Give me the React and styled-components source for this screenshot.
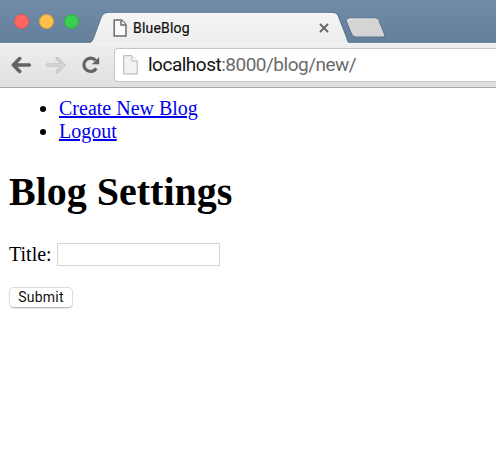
import React from 'react';
import styled, { createGlobalStyle } from 'styled-components';

const GlobalStyle = createGlobalStyle`
  * { box-sizing: border-box; }
  body { margin: 0; background: #fff; overflow: hidden; }
`;

const Browser = styled.div`
  display: flex;
  flex-direction: column;
  width: 496px;
  height: 454px;
  overflow: hidden;
  background: #fff;
`;

const TabStrip = styled.header`
  display: flex;
  align-items: flex-start;
  height: 43px;
  background: linear-gradient(#718ca8, #657f9b);
`;

const WindowControls = styled.div`
  display: flex;
  gap: 10px;
  width: 90px;
  padding: 14px 0 0 14px;
`;

const ControlDot = styled.span`
  width: 15px;
  height: 15px;
  border-radius: 50%;
  background: ${(p) => p.$fill};
  border: 1px solid ${(p) => p.$edge};
`;

const Tab = styled.div`
  display: flex;
  height: 31px;
  margin-top: 12px;
`;

const TabEdge = styled.svg`
  display: block;
  width: 18px;
  height: 31px;
`;

const TabBody = styled.div`
  display: flex;
  align-items: center;
  width: 223px;
  height: 30px;
  margin-top: 1px;
  padding: 0 0 0 5px;
  background: linear-gradient(#f5f5f5, #ededed);
`;

const TabTitle = styled.span`
  width: 186px;
  margin-left: 6px;
  font: 14px/20px Roboto, sans-serif;
  letter-spacing: 0.2px;
  color: #111;
  -webkit-text-stroke: 0.2px #111;
`;

const Glyph = styled.svg`
  display: block;
  flex: none;
`;

const NewTab = styled(Glyph)`
  margin: 17px 0 0 -5px;
`;

const Toolbar = styled.nav`
  display: flex;
  align-items: flex-start;
  height: 45px;
  padding: 4px 0 0 11px;
  background: linear-gradient(#eeeeee, #e0e0e0);
  border-top: 1px solid #f5f5f5;
  border-bottom: 1px solid #a9a9a9;
`;

const NavIcons = styled.div`
  display: flex;
  align-items: center;
  gap: 14px;
  width: 103px;
  height: 34px;
`;

const AddressBar = styled.div`
  display: flex;
  align-items: center;
  flex: 1;
  height: 34px;
  padding-left: 8px;
  background: #fff;
  border: 1px solid #c6c6c6;
  border-right: 0;
  border-radius: 4px 0 0 4px;
`;

const Url = styled.span`
  margin-left: 10px;
  font: 19px/24px Roboto, sans-serif;
  letter-spacing: -0.5px;
  color: #6b6b6b;
  white-space: nowrap;
`;

const Host = styled.span`
  color: #111;
`;

const Page = styled.main`
  padding: 9px 9px;
  font: 20px/22.5px "Liberation Serif", "Times New Roman", serif;
  color: #000;
`;

const Menu = styled.ul`
  margin: 0;
  padding: 0 0 0 50px;
`;

const MenuLink = styled.a`
  color: #0000ee;
  text-decoration: underline;
`;

const Heading = styled.h1`
  margin: 27px 0 27px;
  font-size: 40px;
  line-height: 46px;
  font-weight: bold;
`;

const Field = styled.label`
  display: flex;
  align-items: center;
  height: 24px;
  gap: 5px;
`;

const TextInput = styled.input`
  width: 163px;
  height: 23px;
  margin: 1px 0 0;
  padding: 0 3px;
  background: #fff;
  border: 1px solid #d6d6d6;
  border-radius: 0;
  outline: none;
`;

const SubmitButton = styled.button`
  display: block;
  width: 64px;
  height: 21px;
  margin: 21px 0 0;
  padding: 0;
  font: 14px/19px Roboto, sans-serif;
  letter-spacing: 0.25px;
  color: #111;
  background: #fff;
  border: 1px solid #dcdcdc;
  border-bottom-color: #bcbcbc;
  border-radius: 5px;
  box-shadow: 0 1px 1px rgba(0, 0, 0, 0.1);
`;

export default function App() {
  return (
    <>
      <GlobalStyle />
      <Browser>
        <TabStrip>
          <WindowControls>
            <ControlDot $fill="#ff6561" $edge="#e2554f" />
            <ControlDot $fill="#ffc14a" $edge="#dfa13a" />
            <ControlDot $fill="#3bcc52" $edge="#2dae43" />
          </WindowControls>
          <Tab>
            <TabEdge viewBox="0 0 18 31">
              <defs>
                <linearGradient id="tab" x1="0" y1="0" x2="0" y2="1">
                  <stop offset="0" stopColor="#f5f5f5" />
                  <stop offset="1" stopColor="#ededed" />
                </linearGradient>
              </defs>
              <path d="M0 31C2 30 3 28 4 25L11 6C13 2 14 1 18 1V31Z" fill="url(#tab)" />
              <path d="M0 30.5C2 30 3 28 4 25L11 6C13 2 14 .5 18 .5" fill="none" stroke="#56708b" strokeWidth=".8" />
            </TabEdge>
            <TabBody>
              <Glyph width="14" height="18" viewBox="0 0 14 18" fill="#fafafa" stroke="#6b6b6b" strokeWidth="1.5">
                <path d="M1.2 1H8.5L13 5.5V17H1.2Z" />
                <path d="M8 1V6H13" />
              </Glyph>
              <TabTitle>BlueBlog</TabTitle>
              <Glyph width="10" height="10" viewBox="0 0 10 10" stroke="#656565" strokeWidth="1.9">
                <path d="M1 1L9 9M9 1L1 9" />
              </Glyph>
            </TabBody>
            <TabEdge viewBox="0 0 18 31">
              <path d="M0 1C5 1 6 1 8 7L15 25C16 29 17 30 18 31H0Z" fill="url(#tab)" />
              <path d="M0 .5C5 .5 6.5 1 8.5 7L15.5 25C16.5 29 17 30 18 30.5" fill="none" stroke="#56708b" strokeWidth=".8" />
            </TabEdge>
          </Tab>
          <NewTab width="42" height="22" viewBox="0 0 42 22">
            <path d="M4 1.2H31Q34 1.2 35.2 4L40.4 17Q41.4 20 39.4 20H12Q9 20 7.6 17L2.2 4Q1.4 1.2 4 1.2Z" fill="#d4d4d4" stroke="#566f89" strokeWidth="1" />
            <path d="M5 1.9H31Q33.5 2 34.5 4" fill="none" stroke="#e5e5e5" />
          </NewTab>
        </TabStrip>
        <Toolbar>
          <NavIcons>
            <Glyph width="21" height="18" viewBox="0 0 21 18" fill="none" stroke="#646464" strokeWidth="3.6" strokeLinecap="round" strokeLinejoin="round">
              <path d="M18.3 9H3M8.7 2.6L2.4 9L8.7 15.4" />
            </Glyph>
            <Glyph width="21" height="18" viewBox="0 0 21 18" fill="none" strokeLinecap="round" strokeLinejoin="round">
              <path d="M1.5 9H17M11.3 2.6L17.6 9L11.3 15.4" stroke="#c2c2c2" strokeWidth="3.6" />
              <path d="M1.5 9H17M11.3 2.6L17.6 9L11.3 15.4" stroke="#d3d3d3" strokeWidth="2" />
            </Glyph>
            <Glyph width="19" height="18" viewBox="0 0 19 18" fill="none" stroke="#646464" strokeWidth="3.2">
              <path d="M14.6 4.3A6.7 6.7 0 1 0 15.3 12.3" />
              <path d="M18.2 1V8.3H10.9Z" fill="#646464" stroke="none" />
            </Glyph>
          </NavIcons>
          <AddressBar>
            <Glyph width="15" height="20" viewBox="0 0 15 20" fill="#f2f2f2" stroke="#b4b4b4">
              <path d="M.7 .7H9L14.3 6V19H.7Z" />
              <path d="M9 .7V6H14.3" fill="#fff" />
            </Glyph>
            <Url><Host>localhost</Host>:8000/blog/new/</Url>
          </AddressBar>
        </Toolbar>
        <Page>
          <Menu>
            <li><MenuLink href="#create">Create New Blog</MenuLink></li>
            <li><MenuLink href="#logout">Logout</MenuLink></li>
          </Menu>
          <Heading>Blog Settings</Heading>
          <Field>Title: <TextInput type="text" /></Field>
          <SubmitButton type="button">Submit</SubmitButton>
        </Page>
      </Browser>
    </>
  );
}
